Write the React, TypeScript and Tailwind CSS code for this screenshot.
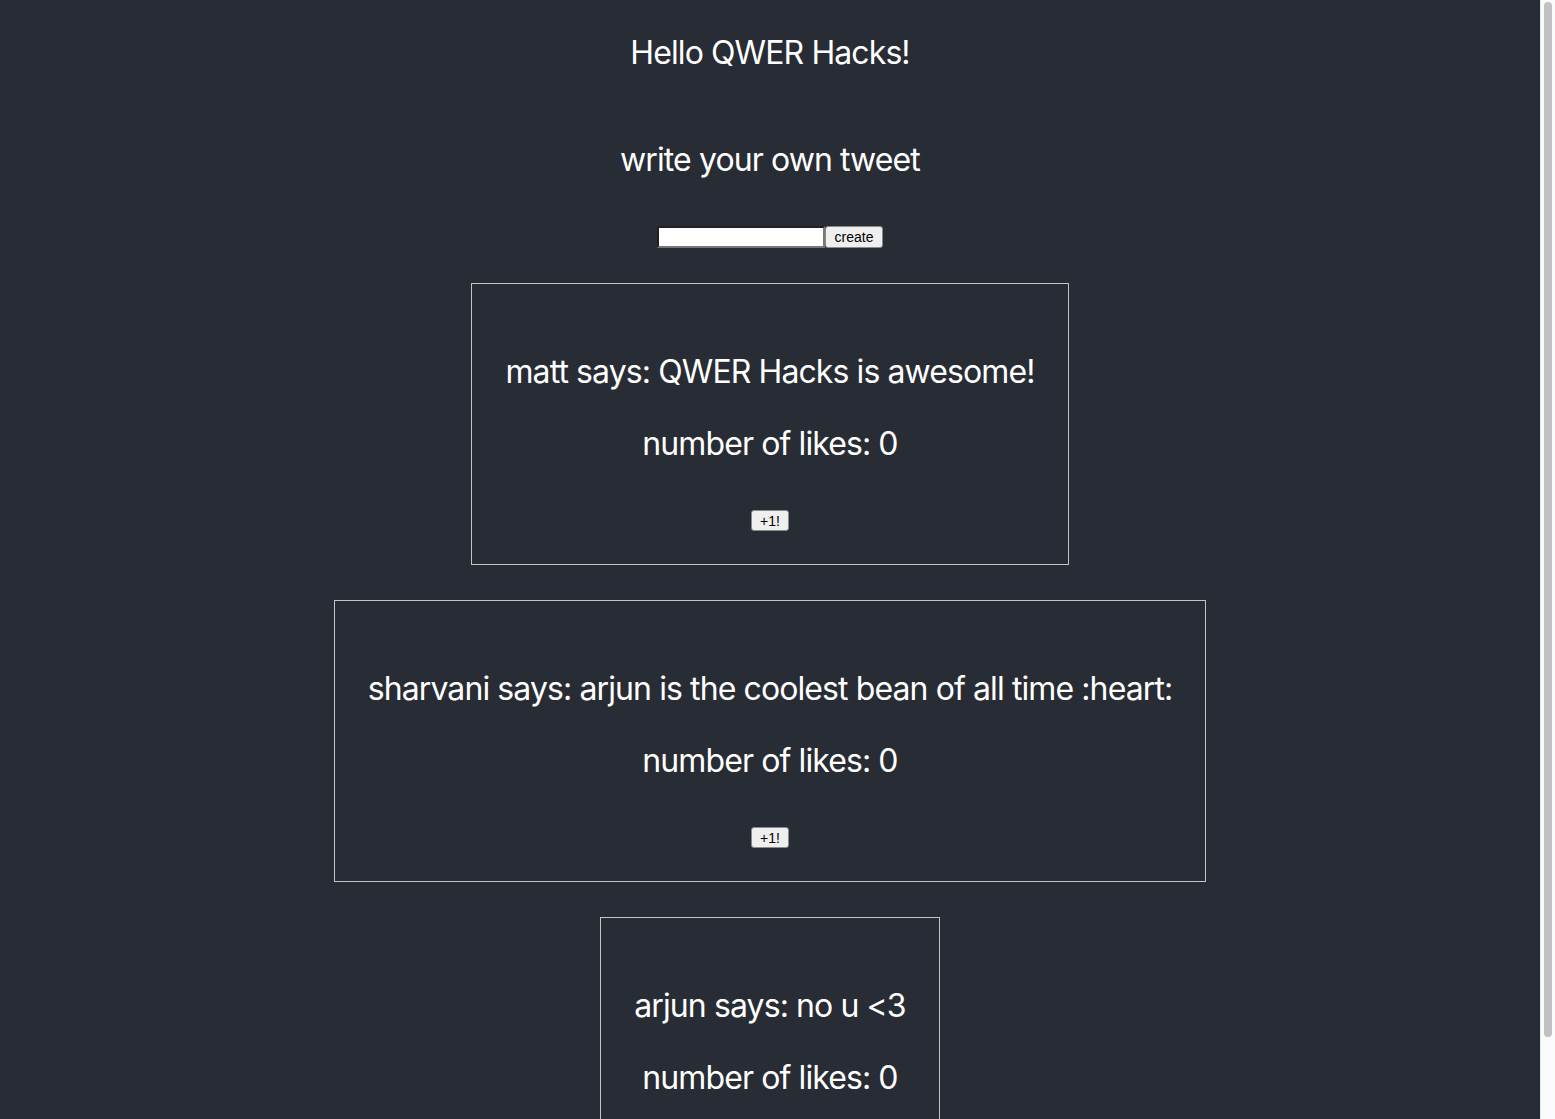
import React from "react";

const tweets = [
  { user: "matt", text: "QWER Hacks is awesome!", likes: 0 },
  { user: "sharvani", text: "arjun is the coolest bean of all time :heart:", likes: 0 },
  { user: "arjun", text: "no u <3", likes: 0 },
];

function Tweet({ user, text, likes }: { user: string; text: string; likes: number }) {
  return (
    <div className="w-fit border border-[#c4c4c4] px-[33px] pt-[68px] pb-[33px] flex flex-col items-center">
      <p className="leading-[39px]">
        {user} says: {text}
      </p>
      <p className="leading-[39px] mt-[33px]">number of likes: {likes}</p>
      <button className="mt-[47px] h-[21px] px-[8px] bg-[#efefef] text-black border border-[#8a8a8a] rounded-[3px] text-[14px] tracking-normal leading-none font-['Liberation_Sans',Arial,sans-serif]">
        +1!
      </button>
    </div>
  );
}

export default function App() {
  return (
    <div className="h-screen flex bg-[#282c34] overflow-hidden">
      <div className="flex-1 text-white text-[32px] tracking-[-0.9px] font-['Inter','Noto_Sans',sans-serif] flex flex-col items-center pt-[33px] pb-[6px]">
        <h1 className="leading-[39px]">Hello QWER Hacks!</h1>
        <p className="leading-[39px] mt-[68px]">write your own tweet</p>
        <div className="mt-[47px] flex items-center tracking-normal">
          <input
            type="text"
            className="w-[168px] h-[22px] bg-white text-black border-2 border-[#767676] [border-style:inset] text-[13px] px-[2px] outline-none"
          />
          <button className="h-[22px] px-[9px] bg-[#efefef] text-black border border-[#8a8a8a] rounded-[3px] text-[14px] leading-none font-['Liberation_Sans',Arial,sans-serif]">
            create
          </button>
        </div>
        <div className="mt-[35px] flex flex-col items-center gap-[35px]">
          {tweets.map((t) => (
            <Tweet key={t.user} {...t} />
          ))}
        </div>
      </div>
      <div className="w-[15px] shrink-0 bg-[#fafafa] border-l border-[#e8e8e8] flex flex-col items-center pt-[2px]">
        <div className="w-[8px] h-[1035px] rounded-full bg-[#c1c1c1]" />
      </div>
    </div>
  );
}
